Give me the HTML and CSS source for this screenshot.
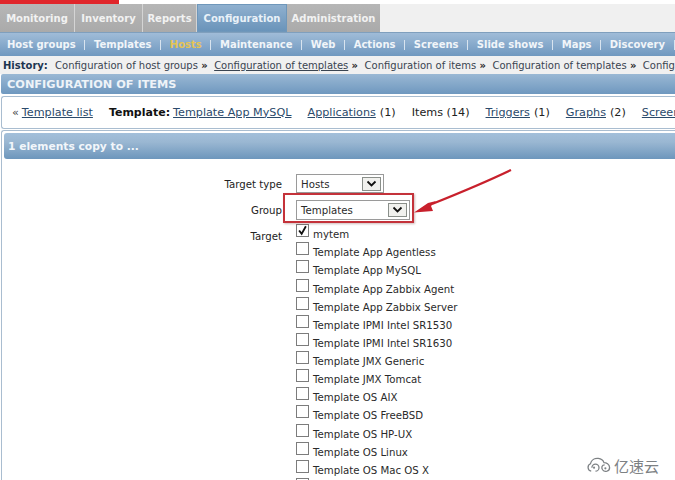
FILE: index.html
```html
<!DOCTYPE html>
<html lang="en">
<head>
<meta charset="utf-8">
<title>Configuration of items</title>
<link rel="stylesheet" href="styles.css">
</head>
<body>
<div class="brand-strip"></div>
<nav class="tabs">
  <a class="tab tab-monitoring">Monitoring</a>
  <a class="tab tab-inventory">Inventory</a>
  <a class="tab tab-reports">Reports</a>
  <a class="tab tab-active">Configuration</a>
  <a class="tab tab-admin">Administration</a>
</nav>
<nav class="subnav">
  <a>Host groups</a><i></i>
  <a>Templates</a><i></i>
  <a class="current">Hosts</a><i></i>
  <a>Maintenance</a><i></i>
  <a>Web</a><i></i>
  <a>Actions</a><i></i>
  <a>Screens</a><i></i>
  <a>Slide shows</a><i></i>
  <a>Maps</a><i></i>
  <a>Discovery</a><i></i>
</nav>
<div class="history">
  <b>History:</b>
  <span class="crumb">Configuration of host groups</span><span class="sep">»</span>
  <u class="crumb">Configuration of templates</u><span class="sep">»</span>
  <span class="crumb">Configuration of items</span><span class="sep">»</span>
  <span class="crumb">Configuration of templates</span><span class="sep">»</span>
  <span class="crumb">Configuration of items</span>
</div>
<div class="page-title">CONFIGURATION OF ITEMS</div>
<div class="breadcrumbs">
  <span class="lead">«</span><u>Template list</u>
  <b class="tpl-label">Template:</b><u>Template App MySQL</u>
  <u class="gap">Applications</u><span>(1)</span>
  <span class="gap">Items (14)</span>
  <u class="gap">Triggers</u><span>(1)</span>
  <u class="gap">Graphs</u><span>(2)</span>
  <u class="gap">Screens</u>
</div>
<section class="panel">
  <h2 class="panel-head">1 elements copy to ...</h2>
  <form class="copy-form">
    <label class="field-label">Target type</label>
    <div class="select select-type"><span>Hosts</span><svg class="arrow-btn" viewBox="0 0 19 14"><rect x=".5" y=".5" width="18" height="13" fill="#f1f1ee" stroke="#8a8f8a"/><path d="M5.500 4.500l4 4 4-4" fill="none" stroke="#111" stroke-width="1.800"/></svg></div>
    <label class="field-label">Group</label>
    <div class="select select-group"><span>Templates</span><svg class="arrow-btn" viewBox="0 0 19 14"><rect x=".5" y=".5" width="18" height="13" fill="#f1f1ee" stroke="#8a8f8a"/><path d="M5.500 4.500l4 4 4-4" fill="none" stroke="#111" stroke-width="1.800"/></svg></div>
    <label class="field-label target-label">Target</label>
    <ul class="targets">
      <li><span class="box"><svg viewBox="0 0 13 13"><path d="M2.500 6.500l3 4 5-9" fill="none" stroke="#111" stroke-width="2.200"/></svg></span>mytem</li>
      <li><span class="box"></span>Template App Agentless</li>
      <li><span class="box"></span>Template App MySQL</li>
      <li><span class="box"></span>Template App Zabbix Agent</li>
      <li><span class="box"></span>Template App Zabbix Server</li>
      <li><span class="box"></span>Template IPMI Intel SR1530</li>
      <li><span class="box"></span>Template IPMI Intel SR1630</li>
      <li><span class="box"></span>Template JMX Generic</li>
      <li><span class="box"></span>Template JMX Tomcat</li>
      <li><span class="box"></span>Template OS AIX</li>
      <li><span class="box"></span>Template OS FreeBSD</li>
      <li><span class="box"></span>Template OS HP-UX</li>
      <li><span class="box"></span>Template OS Linux</li>
      <li><span class="box"></span>Template OS Mac OS X</li>
      <li><span class="box"></span></li>
    </ul>
  </form>
</section>

<!-- Annotation drawn over the form: frame around the Group select and the arrow pointing at it -->
<div class="callout-frame"></div>
<svg class="callout-arrow" viewBox="0 0 110 50">
  <path d="M97 2C72 14 48 24 18 36" fill="none" stroke="#c8202c" stroke-width="2.200"/>
  <path d="M0 44.500L14 35 22 33 17 38 19 43z" fill="#c8202c"/>
</svg>

<div class="watermark">
  <svg viewBox="0 0 36 24" class="watermark-mark"><path d="M7 20a5.500 5.500 0 0 1-1-10.500C7 4 12 1.500 17 2c4 .5 7 3 8 6 3 0 8 2 8 7a5.500 5.500 0 0 1-10 3c-2-3-1-7 3-7M13 20a5 5 0 1 0-5-5" fill="none" stroke="#7d8184" stroke-width="1.800"/><circle cx="11" cy="15" r="1.500" fill="#7d8184"/><circle cx="27" cy="16" r="1.500" fill="#7d8184"/></svg>
  <span>亿速云</span>
</div>
</body>
</html>
```
FILE: styles.css
```css
html, body {
  margin: 0;
  padding: 0;
  height: 480px;
  overflow: hidden;
  background: #fff;
}
body {
  position: relative;
  width: 675px;
  font-family: "DejaVu Sans", Verdana, sans-serif;
  font-size: 10px;
  color: #2a2a2a;
}

.brand-strip {
  width: 119px;
  height: 4px;
  background: #e0262b;
}

/* Main menu */
.tabs {
  display: flex;
  height: 28px;
  background: #f0f0f0;
  width: 675px;
}
.tab {
  box-sizing: border-box;
  display: flex;
  align-items: center;
  justify-content: center;
  height: 28px;
  background: linear-gradient(#b6b6b6, #aaa);
  color: #f2f2f2;
  font-weight: bold;
  font-size: 10px;
  border-right: 1px solid #d4d4d4;
}
.tab-monitoring { width: 75px; }
.tab-inventory { width: 68px; }
.tab-reports { width: 54px; }
.tab-active {
  width: 90px;
  background: linear-gradient(#8fb0cf, #6a94ba);
  border: 1px solid #6f97ba;
  color: #e9f1f8;
}
.tab-admin { width: 93px; border-right: 0; }

.subnav {
  box-sizing: border-box;
  display: flex;
  align-items: center;
  height: 24px;
  padding: 0 0 0 7px;
  white-space: nowrap;
  overflow: hidden;
  background: linear-gradient(#a0bcd8, #6f98bf);
  border-top: 1px solid #7f9fbd;
  color: #f1f5f9;
  font-weight: bold;
  font-size: 10px;
}
.subnav i {
  flex: none;
  width: 1px;
  height: 10px;
  margin: 0 8.650px;
  background: #d8e4ef;
}
.subnav .current { color: #e6c453; }

.history {
  box-sizing: border-box;
  height: 18px;
  padding: 4px 0 0 3px;
  white-space: nowrap;
  overflow: hidden;
  background: #f0f0f0;
  font-size: 10px;
  color: #3a4450;
}
.history b { color: #1d3550; margin-right: 4px; }
.history .sep { margin: 0 3.300px; color: #222; font-weight: bold; }

.page-title {
  box-sizing: border-box;
  height: 20px;
  padding: 4px 0 0 6px;
  border-radius: 2px 0 0 2px;
  background: linear-gradient(#9ab8d4, #6f98bf);
  color: #eef3f8;
  font-weight: bold;
  font-size: 11.300px;
  margin-left: 1px;
}

.breadcrumbs {
  box-sizing: border-box;
  display: flex;
  align-items: center;
  height: 33px;
  margin: 2px 0 0 1px;
  padding: 0 0 1px 10px;
  white-space: nowrap;
  overflow: hidden;
  border: 1px solid #a9bdd0;
  border-right: 0;
  border-radius: 3px 0 0 3px;
  font-size: 11.200px;
  color: #222;
}
.breadcrumbs u { color: #2b4a6b; }
.breadcrumbs .lead { margin-right: 3px; color: #444; }
.breadcrumbs .tpl-label { margin: 0 3px 0 12px; color: #111; font-size: 11px; }
.breadcrumbs span, .breadcrumbs u { margin-right: 4px; }
.breadcrumbs .gap { margin-left: 12px; }

.panel {
  box-sizing: border-box;
  margin: 1px 0 0 1px;
  padding: 2px 0 0 2px;
  height: 352px;
  overflow: hidden;
  border: 1px solid #a9bdd0;
  border-right: 0;
  border-bottom: 0;
  border-radius: 3px 0 0 0;
}
.panel-head {
  box-sizing: border-box;
  height: 26px;
  margin: 0;
  padding: 7px 0 0 4px;
  border-radius: 3px 0 0 3px;
  background: linear-gradient(#a2bfda, #9ab7d2 35%, #6d96bc);
  color: #f2f6fa;
  font-size: 10.700px;
  font-weight: bold;
}

.copy-form {
  display: grid;
  grid-template-columns: 278px auto;
  grid-auto-rows: min-content;
  column-gap: 14px;
  justify-items: start;
  padding-top: 15px;
}
.field-label {
  justify-self: end;
  font-size: 10.200px;
  color: #222;
  line-height: 22px;
}
.select {
  box-sizing: border-box;
  display: flex;
  align-items: center;
  justify-content: space-between;
  height: 19px;
  border: 1px solid #9a9a9a;
  padding: 0 2px 0 4px;
  font-size: 10.200px;
}
.select-type { width: 88px; margin-bottom: 7px; padding-top: 1px; }
.select-group { width: 114px; height: 20px; margin-bottom: 2px; }
.arrow-btn { width: 19px; height: 14px; }
.target-label { line-height: 18px; margin-top: 6px; }

.targets {
  list-style: none;
  margin: 0;
  padding: 0;
}
.targets li {
  display: flex;
  align-items: flex-end;
  height: 18.140px;
  font-size: 10.200px;
  white-space: nowrap;
  color: #2a2a2a;
}
.box {
  box-sizing: border-box;
  width: 13px;
  height: 13px;
  margin: 0 4px 3px 0;
  border: 1px solid #7c7c7c;
  background: #fff;
}
.box svg { display: block; width: 11px; height: 11px; }

/* Annotation layer */
.callout-frame {
  box-sizing: border-box;
  position: absolute;
  left: 283px;
  top: 193px;
  width: 131px;
  height: 30px;
  border: 2px solid #c4323a;
  box-shadow: 1px 1px 2px rgba(120, 60, 60, .35);
}
.callout-arrow {
  position: absolute;
  left: 414px;
  top: 168px;
  width: 110px;
  height: 50px;
}

.watermark {
  position: absolute;
  right: 16px;
  bottom: 4px;
  display: flex;
  align-items: center;
  gap: 2px;
  color: #7d8184;
  font-family: "Noto Sans CJK SC", sans-serif;
  font-size: 15px;
  background: rgba(255, 255, 255, .6);
}
.watermark-mark { width: 26px; height: 17px; }
```
